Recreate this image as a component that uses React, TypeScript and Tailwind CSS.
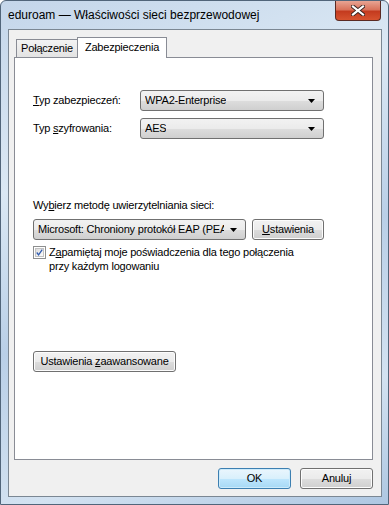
import React from "react";

const font = { fontFamily: '"Liberation Sans", Arial, sans-serif' };

function Combo({ text, width }: { text: string; width: string }) {
  return (
    <div
      className={`${width} h-[21px] flex items-center justify-between rounded-[3px] border border-[#707070] bg-[linear-gradient(#f2f2f2_0%,#ebebeb_50%,#dddddd_51%,#cfcfcf_100%)] pl-[4px] pr-[8px] overflow-hidden`}
    >
      <span className="whitespace-nowrap overflow-hidden">{text}</span>
      <svg width="7" height="4" viewBox="0 0 7 4" className="shrink-0 ml-[6px]">
        <path d="M0 0h7L3.5 4z" fill="#000" />
      </svg>
    </div>
  );
}

function Btn({ children, width, def }: { children: React.ReactNode; width: string; def?: boolean }) {
  return (
    <div
      className={`${width} h-[21px] flex items-center justify-center whitespace-pre rounded-[3px] border ${
        def
          ? "border-[#3c7fb1] bg-[linear-gradient(#eaf6fd_0%,#d9f0fc_50%,#bee6fd_51%,#a7d9f5_100%)] shadow-[inset_0_0_0_1px_#cdebfb]"
          : "border-[#707070] bg-[linear-gradient(#f2f2f2_0%,#ebebeb_50%,#dddddd_51%,#cfcfcf_100%)] shadow-[inset_0_0_0_1px_#fcfcfc]"
      }`}
    >
      {children}
    </div>
  );
}

export default function App() {
  return (
    <div
      style={font}
      className="relative w-[389px] h-[505px] text-[11px] tracking-[-0.2px] text-black bg-[linear-gradient(160deg,#c4d6ea_0%,#dbe8f4_30%,#b9cfe7_55%,#d3e2f1_80%,#aec7e2_100%)] border border-[#51657a] rounded-t-[6px] flex flex-col overflow-hidden"
    >
      {/* title bar */}
      <div className="h-[28px] flex items-center pl-[7px] text-[12px] tracking-normal text-black">
        eduroam — Właściwości sieci bezprzewodowej
      </div>
      <div className="absolute top-0 right-[7px] w-[46px] h-[20px] rounded-b-[4px] border border-t-0 border-[#5a2a23] bg-[linear-gradient(#e8a493_0%,#d9735c_45%,#c43b1f_55%,#d7532f_100%)] flex items-center justify-center">
        <svg width="14" height="11" viewBox="0 0 14 11">
          <path d="M2 1.5l10 8M12 1.5l-10 8" stroke="#3a2420" strokeWidth="4" strokeLinecap="square" />
          <path d="M2 1.5l10 8M12 1.5l-10 8" stroke="#fff" strokeWidth="2.2" strokeLinecap="square" />
        </svg>
      </div>

      {/* client area */}
      <div className="ml-[7px] mr-[6px] h-[468px] border border-[#7b8793] bg-[#f0f0f0] flex flex-col pl-[5px] pr-[8px] pt-[6px]">
        {/* tabs */}
        <div className="flex items-end h-[21px] pl-[2px]">
          <div className="w-[62px] h-[18px] flex items-center justify-center border border-b-0 border-[#898c95] bg-[linear-gradient(#f3f3f3,#e3e3e3)]">
            Połączenie
          </div>
          <div className="w-[90px] h-[21px] pb-[2px] -ml-[1px] flex items-center justify-center border border-b-0 border-[#898c95] bg-white relative z-10 -mb-[1px]">
            Zabezpieczenia
          </div>
        </div>
        {/* panel */}
        <div className="h-[403px] border border-[#898c95] bg-white flex flex-col pl-[18px]">
          <div className="mt-[32px] flex items-center h-[21px]">
            <span className="w-[107px]">
              <span className="underline">T</span>yp zabezpieczeń:
            </span>
            <Combo text="WPA2-Enterprise" width="w-[184px]" />
          </div>
          <div className="mt-[7px] flex items-center h-[21px]">
            <span className="w-[107px]">
              Typ <span className="underline">s</span>zyfrowania:
            </span>
            <Combo text="AES" width="w-[184px]" />
          </div>
          <div className="mt-[58px] h-[16px] flex items-center">
            Wy<span className="underline">b</span>ierz metodę uwierzytelniania sieci:
          </div>
          <div className="mt-[6px] flex items-center gap-[6px]">
            <Combo text="Microsoft: Chroniony protokół EAP (PEAP)" width="w-[213px]" />
            <Btn width="w-[72px]">
              <span className="underline">U</span>stawienia
            </Btn>
          </div>
          <div className="mt-[5px] flex items-start gap-[3px]">
            <div className="mt-[1px] w-[13px] h-[13px] border border-[#8e8f8f] bg-white p-[1px] shrink-0">
              <div className="w-full h-full border border-[#c2c2c2] bg-[linear-gradient(135deg,#dcdcdc,#fbfbfb)] flex items-center justify-center">
                <svg width="9" height="9" viewBox="0 0 9 9">
                  <path d="M1 4.5l2.3 3L8 0.8" stroke="#2f5bb0" strokeWidth="1.6" fill="none" />
                </svg>
              </div>
            </div>
            <div className="leading-[14px]">
              Z<span className="underline">a</span>pamiętaj moje poświadczenia dla tego połączenia
              <br />
              przy każdym logowaniu
            </div>
          </div>
          <div className="mt-[78px]">
            <Btn width="w-[143px]">
              Ustawienia <span className="underline">z</span>aawansowane
            </Btn>
          </div>
        </div>
        {/* bottom buttons */}
        <div className="flex justify-end gap-[9px] mt-[8px]">
          <Btn width="w-[73px]" def>
            OK
          </Btn>
          <Btn width="w-[73px]">Anuluj</Btn>
        </div>
      </div>
    </div>
  );
}
